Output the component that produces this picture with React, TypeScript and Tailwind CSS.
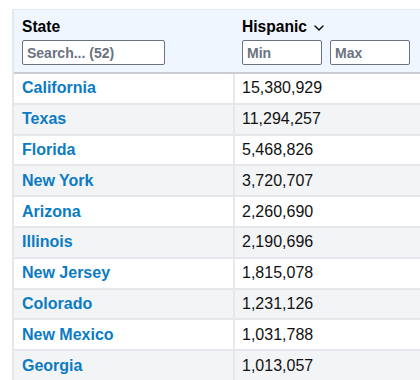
import React from 'react';
import { ChevronDown } from 'lucide-react';

interface StateRow {
    name: string;
    hispanic: number;
}

const rows: StateRow[] = [
    { name: 'California', hispanic: 15380929 },
    { name: 'Texas', hispanic: 11294257 },
    { name: 'Florida', hispanic: 5468826 },
    { name: 'New York', hispanic: 3720707 },
    { name: 'Arizona', hispanic: 2260690 },
    { name: 'Illinois', hispanic: 2190696 },
    { name: 'New Jersey', hispanic: 1815078 },
    { name: 'Colorado', hispanic: 1231126 },
    { name: 'New Mexico', hispanic: 1031788 },
    { name: 'Georgia', hispanic: 1013057 },
];

const inputClass =
    'h-[25px] border border-[#6b7280] rounded-[2px] bg-white px-[4px] text-[14px] font-bold text-[#111827] placeholder:text-[#6b7280] outline-none';

const App: React.FC = () => {
    return (
        <div className="w-[420px] h-[380px] overflow-hidden bg-white pt-[9px] pl-[12px] font-['Liberation_Sans',Arial,sans-serif]">
            <div className="w-[420px] border-t border-l-2 border-[#e5e7eb]">
                {/* header */}
                <div className="grid grid-cols-[219px_1fr] h-[64px] bg-[#eff6ff] border-b-2 border-[#c9cdd3]">
                    <div className="pl-[8px] pt-[7px]">
                        <div className="text-[15.6px] font-bold leading-[19px] text-black">State</div>
                        <input className={`${inputClass} mt-[4px] w-[143px]`} placeholder="Search... (52)" />
                    </div>
                    <div className="pl-[9px] pt-[7px]">
                        <div className="flex items-center gap-[4px] text-[15.6px] font-bold leading-[19px] text-black">
                            Hispanic
                            <ChevronDown size={16} strokeWidth={2} className="mt-[3px]" />
                        </div>
                        <div className="flex gap-[8px] mt-[4px]">
                            <input className={`${inputClass} w-[80px]`} placeholder="Min" />
                            <input className={`${inputClass} w-[80px]`} placeholder="Max" />
                        </div>
                    </div>
                </div>
                {/* body */}
                {rows.map((r, i) => (
                    <div
                        key={r.name}
                        className={`grid grid-cols-[219px_1fr] h-[30.8px] border-b-2 border-[#e5e7eb] ${i % 2 === 1 ? 'bg-[#f3f4f6]' : 'bg-white'}`}
                    >
                        <div className="pl-[8px] flex items-center text-[16px] font-bold text-[#0a7bc4]">
                            {r.name}
                        </div>
                        <div className="pl-[7px] flex items-center text-[16px] text-[#111] border-l-2 border-[#e5e7eb]">
                            {r.hispanic.toLocaleString('en-US')}
                        </div>
                    </div>
                ))}
            </div>
        </div>
    );
};

export default App;
